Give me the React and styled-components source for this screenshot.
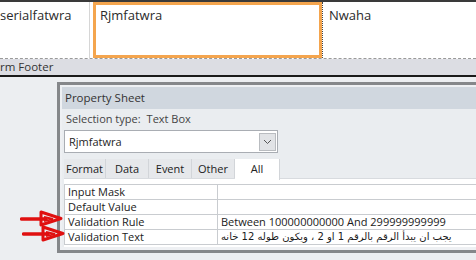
import React from 'react'
import styled, { createGlobalStyle } from 'styled-components'

const Global = createGlobalStyle`
  html, body { margin: 0; padding: 0; }
  body {
    width: 476px;
    height: 260px;
    overflow: hidden;
    background: #eceef1;
    font-family: "Open Sans", "Noto Sans", sans-serif;
    color: #1e1e1e;
  }
`

const Page = styled.div`
  position: relative;
  width: 476px;
  height: 260px;
`

const FormRow = styled.div`
  display: flex;
  height: 56px;
  background: #fff;
  border-top: 2px solid #3a3a3a;
  border-bottom: 1px dashed #9a9a9a;
`

const Field = styled.div`
  box-sizing: border-box;
  width: ${p => p.w}px;
  padding: ${p => p.pad || '4px 6px'};
  font-size: 13px;
  color: #2b2b2b;
  border-right: ${p => p.divider || 'none'};
  border-left: ${p => p.dotted ? '1px dotted #444' : 'none'};
  ${p => p.selected && `
    border: 3px solid #f4a54e;
    margin-left: 3px;
  `}
`

const FooterBand = styled.div`
  height: 16px;
  background: #dcdde3;
  border-bottom: 2px solid #1a1a1a;
  font-size: 11.5px;
  line-height: 16px;
  color: #333;
`

const Workspace = styled.div`
  padding: 5px 0 0 57px;
`

const Sheet = styled.div`
  border: 3px solid #85878a;
  border-right: none;
  background: #eef0f3;
  padding: 2px 0 3px 2px;
`

const TitleBar = styled.div`
  height: 22px;
  background: #d0d7df;
  font-size: 11.5px;
  line-height: 22px;
  padding-left: 3px;
  color: #333;
`

const Body = styled.div`
  padding: 0 0 0 2px;
  background: #eaedf0;
`

const SelLine = styled.div`
  height: 20px;
  font-size: 11px;
  line-height: 20px;
  color: #444;
  padding-left: 2px;
  span { margin-left: 6px; }
`

const Combo = styled.div`
  box-sizing: border-box;
  width: 214px;
  height: 23px;
  margin-top: 1px;
  background: #fff;
  border: 1px solid #a9adb3;
  display: flex;
  align-items: center;
  justify-content: space-between;
  font-size: 11px;
  padding-left: 4px;
`

const DropBtn = styled.div`
  box-sizing: border-box;
  width: 17px;
  height: 18px;
  margin-right: 1px;
  background: #e1e3e6;
  border: 1px solid #b9bcc0;
  display: flex;
  align-items: center;
  justify-content: center;
`

const Tabs = styled.div`
  display: flex;
  margin-top: 6px;
  height: 19px;
`

const Tab = styled.div`
  box-sizing: border-box;
  width: ${p => p.w}px;
  height: ${p => (p.active ? 21 : 19)}px;
  font-size: 11px;
  line-height: 19px;
  text-align: center;
  background: ${p => (p.active ? '#fff' : '#e6e8eb')};
  border-right: 1px solid #d2d5d9;
  color: #222;
  position: relative;
  z-index: ${p => (p.active ? 1 : 0)};
`

const Grid = styled.div`
  background: #fff;
  padding: 5px 0 2px 0;
  border-top: 1px solid #d8dbdf;
`

const Row = styled.div`
  display: grid;
  grid-template-columns: 154px 1fr;
  height: 14px;
  border-top: 1px solid #c9ccd0;
  font-size: 11px;
  line-height: 14px;
  color: #1a1a1a;
  &:last-child { border-bottom: 1px solid #c9ccd0; }
`

const Label = styled.div`
  padding-left: 3px;
  border-right: 1px solid #c9ccd0;
  border-left: 1px solid #c9ccd0;
`

const Value = styled.div`
  padding-left: 3px;
  white-space: nowrap;
  overflow: hidden;
  direction: ${p => (p.rtl ? 'rtl' : 'ltr')};
  text-align: left;
  font-family: ${p => (p.rtl ? '"DejaVu Sans", "Noto Sans", sans-serif' : 'inherit')};
  font-size: ${p => (p.rtl ? '10px' : '11px')};
`

const Arrow = styled.svg`
  position: absolute;
  left: ${p => p.x}px;
  top: ${p => p.y}px;
`

const RedArrow = ({ x, y }) => (
  <Arrow x={x} y={y} width="44" height="18" viewBox="0 0 44 18">
    <path d="M1.5 9 L26 9" stroke="#e01010" strokeWidth="3.5" strokeLinecap="round" fill="none" />
    <path d="M21 2 L41 8.5 L21 15 Z" stroke="#e01010" strokeWidth="3" fill="none" strokeLinejoin="round" />
    <path d="M24 7 L33 9 L24 11" stroke="#e01010" strokeWidth="2" fill="none" />
  </Arrow>
)

const props = [
  ['Input Mask', ''],
  ['Default Value', ''],
  ['Validation Rule', 'Between 100000000000 And 299999999999'],
  ['Validation Text', 'يجب ان يبدأ الرقم بالرقم 1 او 2 ، ويكون طوله 12 خانه', true],
]

export default function App() {
  return (
    <Page>
      <Global />
      <FormRow>
        <Field w={90} divider="1px solid #d6d6d6" pad="4px 0 0 0">serialfatwra</Field>
        <Field w={229} selected pad="1px 4px">Rjmfatwra</Field>
        <Field w={154} dotted pad="4px 6px">Nwaha</Field>
      </FormRow>
      <FooterBand>rm Footer</FooterBand>
      <Workspace>
        <Sheet>
          <TitleBar>Property Sheet</TitleBar>
          <Body>
            <SelLine>Selection type:<span>Text Box</span></SelLine>
            <Combo>
              Rjmfatwra
              <DropBtn>
                <svg width="9" height="6" viewBox="0 0 9 6">
                  <path d="M1 1 L4.5 4.5 L8 1" stroke="#555" strokeWidth="1" fill="none" />
                </svg>
              </DropBtn>
            </Combo>
            <Tabs>
              <Tab w={42}>Format</Tab>
              <Tab w={43}>Data</Tab>
              <Tab w={43}>Event</Tab>
              <Tab w={43}>Other</Tab>
              <Tab w={45} active>All</Tab>
            </Tabs>
            <Grid>
              {props.map(([k, v, rtl]) => (
                <Row key={k}>
                  <Label>{k}</Label>
                  <Value rtl={rtl}>{v}</Value>
                </Row>
              ))}
            </Grid>
          </Body>
        </Sheet>
      </Workspace>
      <RedArrow x={20} y={210} />
      <RedArrow x={22} y={225} />
    </Page>
  )
}
